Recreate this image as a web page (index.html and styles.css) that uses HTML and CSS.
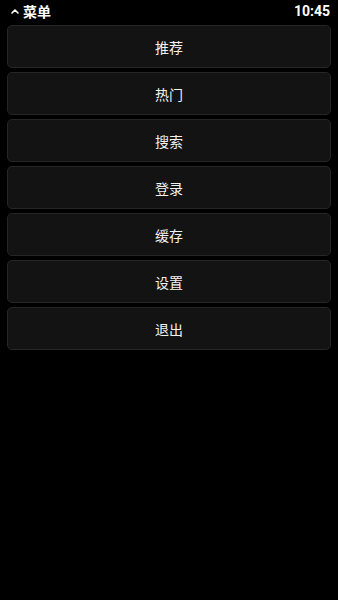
FILE: index.html
```html
<!DOCTYPE html>
<html lang="zh-CN">
<head>
<meta charset="utf-8">
<meta name="viewport" content="width=device-width, initial-scale=1">
<title>菜单</title>
<link rel="stylesheet" href="styles.css">
</head>
<body>
<header class="bar">
  <div class="bar-left">
    <svg class="chev" width="8" height="6" viewBox="0 0 8 6" aria-hidden="true"><path d="M1 5 L4 2 L7 5" fill="none" stroke="#fff" stroke-width="1.6" stroke-linecap="round" stroke-linejoin="round"/></svg>
    <span class="title">菜单</span>
  </div>
  <span class="time">10:45</span>
</header>
<main class="menu">
  <div class="item">推荐</div>
  <div class="item">热门</div>
  <div class="item">搜索</div>
  <div class="item">登录</div>
  <div class="item">缓存</div>
  <div class="item">设置</div>
  <div class="item">退出</div>
</main>
</body>
</html>
```
FILE: styles.css
```css
html, body {
  margin: 0;
  padding: 0;
  background: #000;
  color: #fff;
  font-family: "Noto Sans CJK SC", "Noto Sans", Roboto, sans-serif;
}
.bar {
  height: 25px;
  display: flex;
  align-items: center;
  justify-content: space-between;
  padding: 0 8px 3px 11px;
  box-sizing: border-box;
}
.bar-left {
  display: flex;
  align-items: center;
  gap: 4px;
}
.chev {
  display: block;
  margin-top: -1px;
}
.title {
  font-size: 14px;
  font-weight: 700;
  line-height: 1;
}
.time {
  font-family: Roboto, "Liberation Sans", sans-serif;
  font-size: 14px;
  font-weight: 700;
  line-height: 1;
}
.menu {
  display: flex;
  flex-direction: column;
  gap: 4px;
  padding: 0 7px;
}
.item {
  height: 43px;
  box-sizing: border-box;
  border: 1px solid #262626;
  border-radius: 5px;
  background: #131313;
  display: flex;
  align-items: center;
  justify-content: center;
  font-size: 14px;
  color: #f2f2f2;
}
```
